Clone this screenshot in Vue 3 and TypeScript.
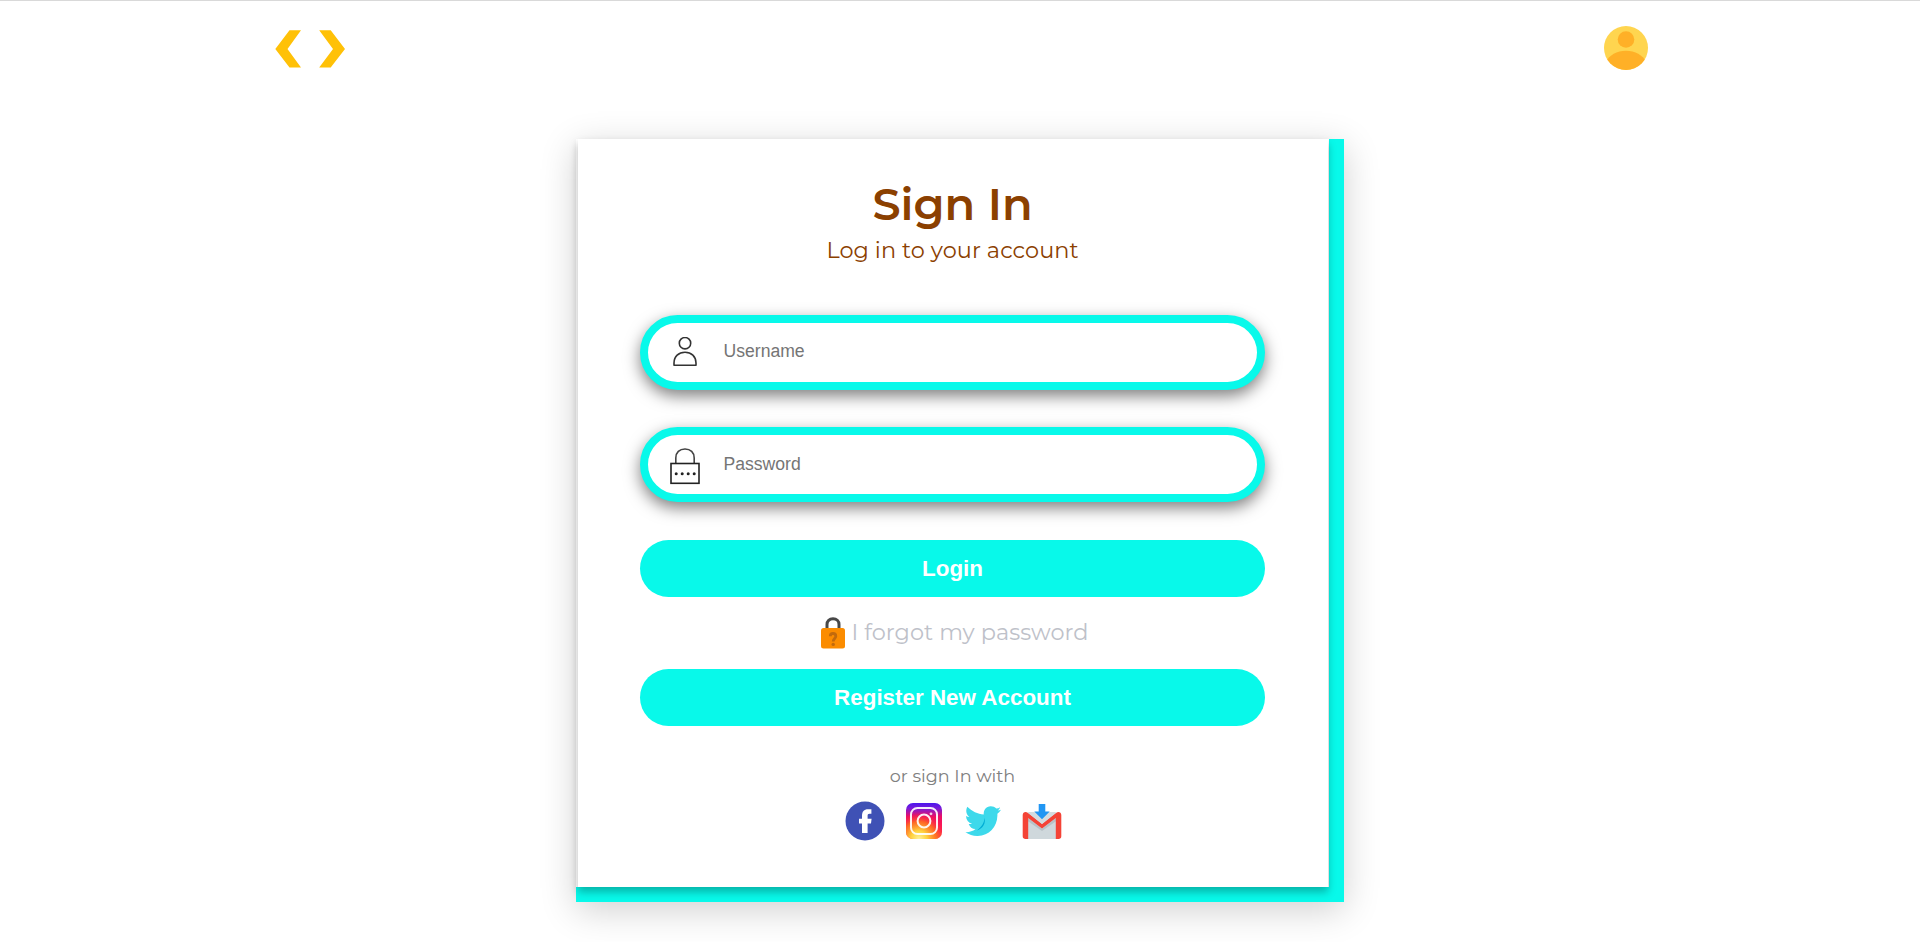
<script setup lang="ts">
import { ref } from 'vue'

const username = ref('')
const password = ref('')
</script>

<template>
  <div class="page">
    <header class="top">
      <svg class="logo" viewBox="0 0 70 38" aria-label="Code">
        <path d="M14.5 0.3H26L12.5 19 26 37.5H14.5L0.3 19z" fill="#ffc107" />
        <path d="M44.2 0.3H55.7L70 19 55.7 37.5H44.2L58 19z" fill="#ffc107" />
      </svg>
      <svg class="avatar" viewBox="0 0 44 44" aria-label="Profile">
        <defs><clipPath id="disc"><circle cx="22" cy="22" r="22" /></clipPath></defs>
        <g clip-path="url(#disc)">
          <rect width="44" height="44" fill="#ffd54f" />
          <circle cx="22" cy="13.5" r="8.3" fill="#ffb027" />
          <path d="M2 36C5 29 13 24.7 22 24.7S39 29 42 36L40 44H4z" fill="#ffb027" />
        </g>
      </svg>
    </header>

    <main class="card">
      <form class="panel" @submit.prevent>
        <h1 class="title">Sign In</h1>
        <p class="subtitle">Log in to your account</p>

        <label class="field">
          <svg class="user-icon" viewBox="0 0 24 30" fill="none" stroke="#333" stroke-width="1.6">
            <circle cx="12" cy="6.2" r="5.7" />
            <path d="M1 28.3V26C1 19.5 5.7 15.2 12 15.2S23 19.5 23 26V28.3z" stroke-linejoin="round" />
          </svg>
          <input v-model="username" type="text" placeholder="Username" />
        </label>
        <label class="field second">
          <svg class="lock-icon" viewBox="0 0 30 37" fill="none" stroke="#222" stroke-width="1.6">
            <path d="M5.8 15.3V10C5.8 4.5 9.5 1 15 1S24.2 4.5 24.2 10V15.3" stroke="#444" />
            <rect x="1" y="15.5" width="28" height="19.8" />
            <g fill="#222" stroke="none">
              <circle cx="6.2" cy="25.7" r="1.5" /><circle cx="12.2" cy="25.7" r="1.5" />
              <circle cx="18.2" cy="25.7" r="1.5" /><circle cx="24.2" cy="25.7" r="1.5" />
            </g>
          </svg>
          <input v-model="password" type="password" placeholder="Password" />
        </label>

        <button class="action" type="submit">Login</button>
        <a class="forgot">
          <svg class="forgot-icon" viewBox="0 0 24 32">
            <path d="M6 13V7.5C6 3.9 8.4 1.8 12 1.8S18 3.9 18 7.5V13" fill="none" stroke="#484848" stroke-width="3" />
            <rect y="11" width="24" height="20.5" rx="2.5" fill="#fb8c00" />
            <path d="M9.3 19.2C9.3 17.3 10.4 16.5 12 16.5S14.8 17.5 14.8 19.3C14.8 21.4 12.2 21.7 12.2 24.6" fill="none" stroke="#c26a0c" stroke-width="2.8" />
            <circle cx="12.2" cy="27.4" r="1.7" fill="#c26a0c" />
          </svg>
          <span class="forgot-text">I forgot my password</span>
        </a>
        <button class="action" type="button">Register New Account</button>

        <p class="alt">or sign In with</p>
        <div class="social">
          <svg viewBox="0 0 40 40" aria-label="Facebook">
            <circle cx="20" cy="20" r="19.5" fill="#3f51b5" />
            <path d="M26 22.6H22.6V32H17V22.6H14V17.8H17V14.8C17 10.4 19 8.2 23 8.2H26.4V12.8H24.6C22.9 12.8 22.6 13.5 22.6 15V17.8H26.6z" fill="#fff" />
          </svg>
          <svg viewBox="0 0 40 40" aria-label="Instagram">
            <defs>
              <linearGradient id="ig-base" x1="0.5" y1="0" x2="0.5" y2="1">
                <stop offset="0" stop-color="#4a16ee" /><stop offset="0.15" stop-color="#7b1bd8" />
                <stop offset="0.38" stop-color="#ee0c63" /><stop offset="0.75" stop-color="#ff1d50" />
                <stop offset="1" stop-color="#ff5a38" />
              </linearGradient>
              <radialGradient id="ig-glow" cx="0.36" cy="1" r="0.75">
                <stop offset="0" stop-color="#fff29a" /><stop offset="0.3" stop-color="#ffd33e" />
                <stop offset="0.65" stop-color="#ff7a1a" stop-opacity="0.8" /><stop offset="1" stop-color="#ff1744" stop-opacity="0" />
              </radialGradient>
            </defs>
            <rect x="2" y="2" width="36" height="36" rx="7" fill="url(#ig-base)" />
            <rect x="2" y="2" width="36" height="36" rx="7" fill="url(#ig-glow)" />
            <g fill="none" stroke="#fff" stroke-width="2" stroke-opacity="0.92">
              <rect x="7" y="7" width="26" height="26" rx="6.5" /><circle cx="20" cy="20" r="6.4" />
            </g>
            <circle cx="27" cy="12.8" r="1.4" fill="#fff" fill-opacity="0.8" />
          </svg>
          <svg viewBox="0 0 40 40" aria-label="Twitter">
            <path d="M38 8.7C36.9 9.2 36 9.4 34.8 9.6 36 8.6 36.8 7.4 37.2 6.2 35.9 6.9 34.7 7.4 33.3 7.6 31.8 6 30 5.2 27.8 5.2 22.9 5.2 20.5 9 20.7 13.5 14.8 13.2 8.8 10.3 4.3 5.8 2.3 9.8 3.4 13.6 6.4 16 5.2 15.9 4.1 15.6 3 15 3.2 19.1 5.4 21.8 9 22.8 7.9 23.1 6.8 23.1 5.7 22.9 6.8 26 9.1 27.8 12.5 28.1 9.7 30.4 6.1 31.4 2.4 31.2 6 33.6 9.8 34.9 14.2 34.9 25.7 35.2 34.2 26.5 34.4 14.6V12.7C35.8 11.7 37 10.4 38 8.7z" fill="#3dd9eb" />
            <path d="M20.7 13.5C22.4 20 20.2 24.7 13.8 29.4 19.6 28 23.3 22 21.3 17z" fill="#00acd4" />
          </svg>
          <svg viewBox="0 0 40 40" aria-label="Gmail">
            <path d="M3 12H37V38H3z" fill="#cfd8dc" />
            <path d="M6 17 20 27.8 34 17V20.3L20 30 6 20.3z" fill="#b8c2c7" />
            <path d="M6.2 38H3.5C1.8 38 .7 37 .7 35.3V14C.7 11.2 3.6 10 5.7 11.7L20 23 34.3 11.7C36.4 10 39.3 11.2 39.3 14V35.3C39.3 37 38.2 38 36.5 38H33.8V17L20 27.6 6.2 17z" fill="#f44336" />
            <path d="M6.2 11H33.8V12L20 23 6.2 12z" fill="#d5dcdf" />
            <path d="M16.7 3H23.3V10.5H27.7L20 18.2 12.3 10.5H16.7z" fill="#2196f3" />
          </svg>
        </div>
      </form>
    </main>
  </div>
</template>

<style>
body {
  margin: 0;
  background: #fff;
}
</style>

<style scoped>
.page {
  box-sizing: border-box;
  height: 942px;
  overflow: hidden;
  border-top: 1px solid #d9d9d9;
  background: #fff;
  font-family: Montserrat, Inter, "Liberation Sans", sans-serif;
}
.top {
  display: flex;
  justify-content: space-between;
  box-sizing: border-box;
  height: 138px;
  padding: 25px 272px 0 275px;
}
.logo {
  width: 70px;
  height: 38px;
  margin-top: 3.5px;
}
.avatar {
  width: 44px;
  height: 44px;
}
.card {
  box-sizing: border-box;
  width: 768px;
  height: 763px;
  margin: 0 auto;
  padding: 0 1px 0 2px;
  border-right: 15px solid #08f9ea;
  border-bottom: 15px solid #08f9ea;
  background: #fff;
  box-shadow: 0 8px 34px rgba(0, 0, 0, 0.19);
}
.panel {
  display: flex;
  flex-direction: column;
  align-items: center;
  box-sizing: border-box;
  height: 748px;
  padding: 35px 63px 0 62px;
  background: #fff;
  box-shadow: 0 5px 8px rgba(0, 0, 0, 0.28);
}
.title {
  margin: 0;
  color: #8b4000;
  font-size: 44.8px;
  font-weight: 600;
  line-height: 60px;
  white-space: nowrap;
}
.subtitle {
  margin: 1px 0 50px;
  color: #8b4000;
  font-size: 22.4px;
  font-weight: 400;
  line-height: 30px;
  letter-spacing: 0.06px;
  white-space: nowrap;
}
.field {
  display: flex;
  align-items: flex-start;
  box-sizing: border-box;
  width: 625px;
  height: 75px;
  border: 8px solid #08f9ea;
  border-radius: 38px;
  background: #fff;
  box-shadow: 0 6px 16px rgba(0, 0, 0, 0.5);
}
.second {
  margin: 37px 0 38px;
}
.user-icon {
  flex: none;
  width: 24px;
  height: 30px;
  margin: 14px 26px 0 25px;
}
.lock-icon {
  flex: none;
  width: 30px;
  height: 37px;
  margin: 13px 23px 0 22px;
}
.field input {
  flex: 1;
  min-width: 0;
  height: 24px;
  margin: 16px 20px 0 0.5px;
  padding: 0;
  border: 0;
  outline: 0;
  background: transparent;
  font: 17.6px "Liberation Sans", Arial, sans-serif;
}
.second input {
  margin-top: 17px;
}
.field input::placeholder {
  color: #757575;
}
.action {
  flex: none;
  width: 625px;
  height: 57px;
  padding: 0;
  border: 0;
  border-radius: 29px;
  background: #08f9ea;
  color: #fff;
  font: bold 22.4px "Liberation Sans", Arial, sans-serif;
}
.forgot {
  display: flex;
  height: 52px;
  padding: 20px 0 0 5px;
  color: #bec1c9;
}
.forgot-icon {
  width: 24px;
  height: 32px;
  margin-right: 6px;
}
.forgot-text {
  font-size: 22.4px;
  font-weight: 400;
  line-height: 30px;
  letter-spacing: 0.07px;
  white-space: nowrap;
}
.alt {
  margin: 38px 0 14px;
  color: #808080;
  font-size: 17.6px;
  font-weight: 400;
  line-height: 23px;
}
.social {
  display: flex;
  gap: 19px;
  padding-left: 1px;
}
.social svg {
  width: 40px;
  height: 40px;
}
</style>
